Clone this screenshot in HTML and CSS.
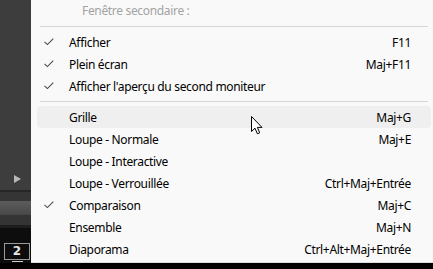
FILE: index.html
```html
<!DOCTYPE html>
<html lang="fr">
<head>
<meta charset="utf-8">
<link rel="stylesheet" href="styles.css">
</head>
<body>
<div class="screen">
  <div class="main">
    <div class="strip">
      <div class="strip-top">
        <span class="play"></span>
      </div>
      <div class="band-dark1"></div>
      <div class="band-light"></div>
      <div class="band-dark2"></div>
      <div class="strip-black">
        <div class="numbox">2</div>
      </div>
    </div>
    <div class="menu">
      <div class="header">Fenêtre secondaire :</div>
      <div class="sep"></div>
      <div class="item"><span class="check"><svg width="10" height="8" viewBox="0 0 10 8"><path d="M0.5 3.8 L3.4 6.6 L9.3 0.7" fill="none" stroke="#4a4a4a" stroke-width="1.1"/></svg></span><span class="label">Afficher</span><span class="key">F11</span></div>
      <div class="item"><span class="check"><svg width="10" height="8" viewBox="0 0 10 8"><path d="M0.5 3.8 L3.4 6.6 L9.3 0.7" fill="none" stroke="#4a4a4a" stroke-width="1.1"/></svg></span><span class="label">Plein écran</span><span class="key">Maj+F11</span></div>
      <div class="item"><span class="check"><svg width="10" height="8" viewBox="0 0 10 8"><path d="M0.5 3.8 L3.4 6.6 L9.3 0.7" fill="none" stroke="#4a4a4a" stroke-width="1.1"/></svg></span><span class="label">Afficher l'aperçu du second moniteur</span><span class="key"></span></div>
      <div class="sep"></div>
      <div class="item hover"><span class="check"></span><span class="label">Grille</span><span class="key">Maj+G</span></div>
      <div class="item"><span class="check"></span><span class="label">Loupe - Normale</span><span class="key">Maj+E</span></div>
      <div class="item"><span class="check"></span><span class="label">Loupe - Interactive</span><span class="key"></span></div>
      <div class="item"><span class="check"></span><span class="label">Loupe - Verrouillée</span><span class="key">Ctrl+Maj+Entrée</span></div>
      <div class="item"><span class="check"><svg width="10" height="8" viewBox="0 0 10 8"><path d="M0.5 3.8 L3.4 6.6 L9.3 0.7" fill="none" stroke="#4a4a4a" stroke-width="1.1"/></svg></span><span class="label">Comparaison</span><span class="key">Maj+C</span></div>
      <div class="item"><span class="check"></span><span class="label">Ensemble</span><span class="key">Maj+N</span></div>
      <div class="item"><span class="check"></span><span class="label">Diaporama</span><span class="key">Ctrl+Alt+Maj+Entrée</span></div>
      <svg class="cursor" width="13" height="20" viewBox="0 0 13 20"><path d="M0.5 0.5 L0.5 15.5 L4 12.2 L6.4 17.8 L8.7 16.8 L6.4 11.4 L11 11.4 Z" fill="#fff" stroke="#000" stroke-width="1" stroke-linejoin="miter"/></svg>
    </div>
  </div>
  <div class="bottom"></div>
</div>
</body>
</html>
```
FILE: styles.css
```css
html, body {
  margin: 0;
  padding: 0;
  background: #000;
}
.screen {
  width: 433px;
  height: 269px;
  display: flex;
  flex-direction: column;
  overflow: hidden;
  font-family: "Noto Sans", "Open Sans", sans-serif;
  font-size: 12px;
  letter-spacing: -0.33px;
}
.main {
  display: flex;
  height: 263px;
}
.strip {
  width: 31px;
  display: flex;
  flex-direction: column;
  background: #3c3c3c;
}
.strip-top {
  height: 190px;
  display: flex;
  align-items: flex-end;
  padding-left: 14px;
  box-sizing: border-box;
  padding-bottom: 7px;
  background: #3d3d3d;
}
.play {
  width: 0;
  height: 0;
  border-top: 4px solid transparent;
  border-bottom: 4px solid transparent;
  border-left: 7px solid #b8b8b8;
}
.band-dark1 {
  height: 11px;
  background: linear-gradient(#262626 0 2px, #353535 2px);
}
.band-light {
  height: 14px;
  background: linear-gradient(#5c5c5c, #484848);
}
.band-dark2 {
  height: 13px;
  background: linear-gradient(#343434 0 10px, #1e1e1e 10px);
}
.strip-black {
  flex: 1;
  background: #0d0d0d;
  padding: 15px 0 0 4px;
}
.numbox {
  width: 24px;
  height: 15px;
  border: 1px solid #9a9a9a;
  color: #e6e6e6;
  font-family: "DejaVu Sans", sans-serif;
  font-weight: bold;
  font-size: 12px;
  letter-spacing: 0;
  line-height: 15px;
  text-align: center;
  position: relative;
}
.numbox::after {
  content: "";
  position: absolute;
  left: 7px;
  width: 11px;
  bottom: -3px;
  height: 1px;
  background: #cfcfcf;
}
.menu {
  flex: 1;
  background: #f9f9f9;
  position: relative;
  display: flex;
  flex-direction: column;
  border-bottom: 1px solid #dcdcdc;
}
.header {
  height: 22px;
  line-height: 22px;
  padding-left: 51px;
  color: #a3a3a3;
}
.sep {
  height: 9px;
  margin: 0 5px 0 9px;
  background: linear-gradient(transparent 0 4px, #d6d6d6 4px 5px, transparent 5px);
}
.item {
  height: 22px;
  display: flex;
  align-items: center;
  margin: 0 2px 0 6px;
  border-radius: 4px;
  color: #000;
}
.item.hover {
  background: #efefef;
}
.check {
  width: 32px;
  padding-left: 7px;
  box-sizing: border-box;
  display: flex;
  align-items: center;
}
.label {
  flex: 1;
  white-space: nowrap;
}
.key {
  padding-right: 20px;
  white-space: nowrap;
}
.cursor {
  position: absolute;
  left: 220px;
  top: 116px;
}
.bottom {
  flex: 1;
  background: #000;
}
```
